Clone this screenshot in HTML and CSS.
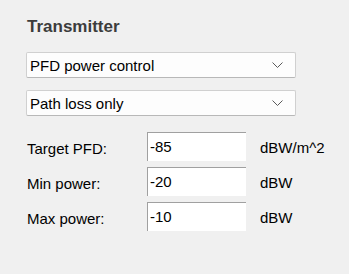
FILE: index.html
```html
<!DOCTYPE html>
<html lang="en">

<head>
  <meta charset="UTF-8" />
  <title>Transmitter</title>
  <link rel="stylesheet" href="styles.css">
</head>

<body>
  <div class="panel">
    <h3 class="title">Transmitter</h3>

    <div class="combo">
      <span>PFD power control</span>
      <svg class="chevron" width="11" height="6" viewBox="0 0 11 6">
        <path d="M0.5 0.5 L5.5 5.5 L10.5 0.5" fill="none" stroke="#5a5a5a" stroke-width="1" />
      </svg>
    </div>

    <div class="combo">
      <span>Path loss only</span>
      <svg class="chevron" width="11" height="6" viewBox="0 0 11 6">
        <path d="M0.5 0.5 L5.5 5.5 L10.5 0.5" fill="none" stroke="#5a5a5a" stroke-width="1" />
      </svg>
    </div>

    <div class="fields">
      <label>Target PFD:</label>
      <div class="field">-85</div>
      <span class="unit">dBW/m^2</span>

      <label>Min power:</label>
      <div class="field">-20</div>
      <span class="unit">dBW</span>

      <label>Max power:</label>
      <div class="field">-10</div>
      <span class="unit">dBW</span>
    </div>
  </div>
</body>

</html>
```

FILE: styles.css
```css
body {
  margin: 0;
  background: #f0f0f0;
  font-family: "Liberation Sans", Arial, sans-serif;
  font-size: 15px;
  color: #000;
}

.panel {
  padding: 16px 0 0 26px;
  width: 270px;
}

.title {
  margin: 0 0 15px 1px;
  font-size: 17px;
  font-weight: bold;
  color: #3c3c3c;
  line-height: 21px;
}

.combo {
  display: flex;
  align-items: center;
  justify-content: space-between;
  height: 24px;
  padding: 0 12px 0 3px;
  margin-bottom: 12px;
  background: #fdfdfd;
  border: 1px solid #d0d0d0;
  border-bottom-color: #b8b8b8;
  border-radius: 2px;
}

.fields {
  display: grid;
  grid-template-columns: 121px 99px auto;
  row-gap: 6px;
  margin-top: 16px;
}

.fields label {
  align-self: center;
  padding: 3px 0 0 1px;
}

.field {
  box-sizing: border-box;
  height: 29px;
  padding: 5px 0 0 2px;
  background: #fff;
  border-top: 1px solid #a0a0a0;
  border-left: 1px solid #a0a0a0;
}

.unit {
  align-self: center;
  padding: 1px 0 0 14px;
}
```
